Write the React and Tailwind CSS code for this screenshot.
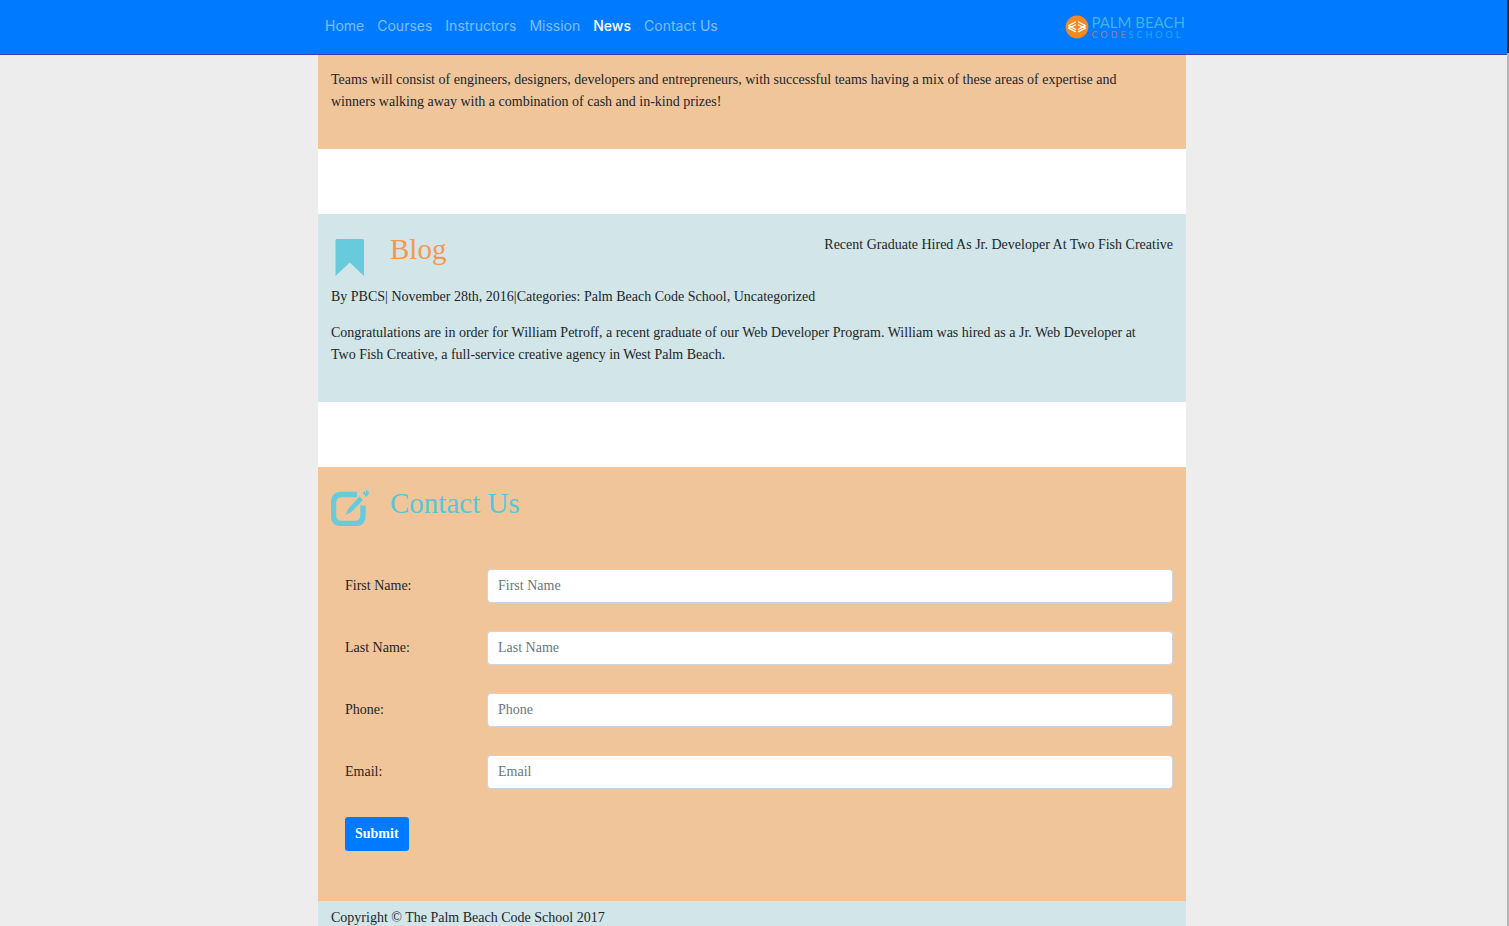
const navLinks = ["Home", "Courses", "Instructors", "Mission", "News", "Contact Us"];

const fields = [
  { id: "first-name", label: "First Name", type: "text" },
  { id: "last-name", label: "Last Name", type: "text" },
  { id: "phone", label: "Phone", type: "tel" },
  { id: "email", label: "Email", type: "email" },
];

function Logo() {
  return (
    <a href="#home" className="flex items-center gap-0.5" aria-label="Palm Beach Code School">
      <svg className="size-6 shrink-0" viewBox="0 0 24 24" fill="none" aria-hidden="true">
        <circle cx="12" cy="12" r="11.4" fill="#f6891f" />
        <g stroke="#fff" strokeWidth="1.3" strokeLinecap="round" strokeLinejoin="round">
          <path d="M10.4 7 3.6 10.600l6.800 3.600" />
          <path d="M10.400 10 3.600 13.200l6.800 3.400" />
          <path d="M13.600 7l6.800 3.600-6.800 3.600" />
          <path d="M13.600 10l6.800 3.200-6.800 3.400" />
        </g>
      </svg>
      <span className="flex flex-col font-['Lato',sans-serif] text-[#2fa3e8]">
        <span className="text-[15px] leading-[15px] text-[#42b3e6]">PALM BEACH</span>
        <span className="text-[9px] leading-[9px] tracking-[3px]">
          <span className="text-[#b07f60]">CODE</span>SCHOOL
        </span>
      </span>
    </a>
  );
}

function BookmarkIcon() {
  return (
    <svg className="size-[38px] shrink-0" viewBox="0 0 38 38" aria-hidden="true">
      <path d="M5.5 1H31.5Q33 1 33 2.500V38L18.800 24.500 4.500 38V2.500Q4.500 1 5.500 1Z" fill="#68cbdc" />
    </svg>
  );
}

function EditIcon() {
  return (
    <svg className="size-[38px] shrink-0" viewBox="0 0 38 38" fill="none" aria-hidden="true">
      <path
        d="M26 6.500H11Q2.500 6.500 2.500 15V27.500Q2.500 35.500 11 35.500H24Q32 35.500 32 27.500V17.500"
        stroke="#68cbdc"
        strokeWidth="5.4"
      />
      <path d="M28.500 8.500 32 12 20.500 24 14.500 27 17.500 20.500Z" fill="#68cbdc" />
      <path d="M31.500 5 35 2Q38 3 38 5.500L35.500 9Z" fill="#68cbdc" />
      <path d="M34.500 0V5M37.500 0V4" stroke="#c9cfae" strokeWidth="1" />
    </svg>
  );
}

export default function App() {
  return (
    <div className="flex h-screen overflow-hidden bg-[#ededed] font-['Liberation_Serif',serif] text-sm leading-[22px] text-[#212529]">
      <div className="flex min-w-0 flex-1 flex-col">
        <header className="shrink-0 border-b border-[#3f3db0] bg-[#007bff] pr-[3px]">
          <nav className="mx-auto flex h-[54px] w-full max-w-[868px] items-center justify-between pr-px pl-[7px]">
            <ul className="flex gap-[13px] pb-0.5 font-['Inter',sans-serif] text-sm">
              {navLinks.map((name) => (
                <li key={name}>
                  <a
                    href={"#" + name.toLowerCase().replace(" ", "-")}
                    className={name === "News" ? "font-medium text-white" : "text-white/50"}
                  >
                    {name}
                  </a>
                </li>
              ))}
            </ul>
            <Logo />
          </nav>
        </header>

        <div className="min-h-0 flex-1 overflow-hidden pr-[3px]">
          <main className="mx-auto flex w-full max-w-[868px] flex-col gap-[65px] bg-white">
            <section className="bg-[#f0c59a] px-[13px] pt-3.5 pb-9">
              <p className="pr-4">
                Teams will consist of engineers, designers, developers and entrepreneurs, with successful
                teams having a mix of these areas of expertise and winners walking away with a combination
                of cash and in-kind prizes!
              </p>
            </section>

            <section id="news" className="bg-[#d2e5e8] px-[13px] pt-5 pb-9">
              <div className="flex items-start justify-between">
                <div className="flex gap-[21px]">
                  <div className="pt-1">
                    <BookmarkIcon />
                  </div>
                  <h2 className="text-[29px] leading-[30px] text-[#f2994f]">Blog</h2>
                </div>
                <p>Recent Graduate Hired As Jr. Developer At Two Fish Creative</p>
              </div>
              <p className="mt-2.5">
                By PBCS| November 28th, 2016|Categories: Palm Beach Code School, Uncategorized
              </p>
              <p className="mt-3.5 pr-4">
                Congratulations are in order for William Petroff, a recent graduate of our Web Developer
                Program. William was hired as a Jr. Web Developer at Two Fish Creative, a full-service
                creative agency in West Palm Beach.
              </p>
            </section>

            <section id="contact-us" className="bg-[#f0c59a] px-[13px] pt-[21px] pb-[50px]">
              <div className="flex gap-[21px]">
                <EditIcon />
                <h2 className="text-[29px] leading-[30px] text-[#58c5d9]">Contact Us</h2>
              </div>
              <form className="mt-[43px] flex flex-col gap-7 pl-3.5" onSubmit={(e) => e.preventDefault()}>
                {fields.map((f) => (
                  <div key={f.id} className="flex items-center">
                    <label htmlFor={f.id} className="w-1/6 grow">
                      {f.label}:
                    </label>
                    <input
                      id={f.id}
                      type={f.type}
                      placeholder={f.label}
                      className="h-[34px] w-5/6 max-w-[686px] rounded border border-[#ced4da] bg-white px-2.5 placeholder:text-[#6c757d]"
                    />
                  </div>
                ))}
                <button
                  type="submit"
                  className="h-[34px] self-start rounded-[3px] bg-[#007bff] px-2.5 font-bold text-white"
                >
                  Submit
                </button>
              </form>
            </section>
          </main>
          <footer className="mx-auto w-full max-w-[868px] bg-[#d2e5e8] px-[13px] py-1.5">
            Copyright © The Palm Beach Code School 2017
          </footer>
        </div>
      </div>
      <div className="flex w-0.5 shrink-0 flex-col bg-[#b5b5b5]">
        <div className="h-[53px] bg-[#2b2b2b]" />
      </div>
    </div>
  );
}
